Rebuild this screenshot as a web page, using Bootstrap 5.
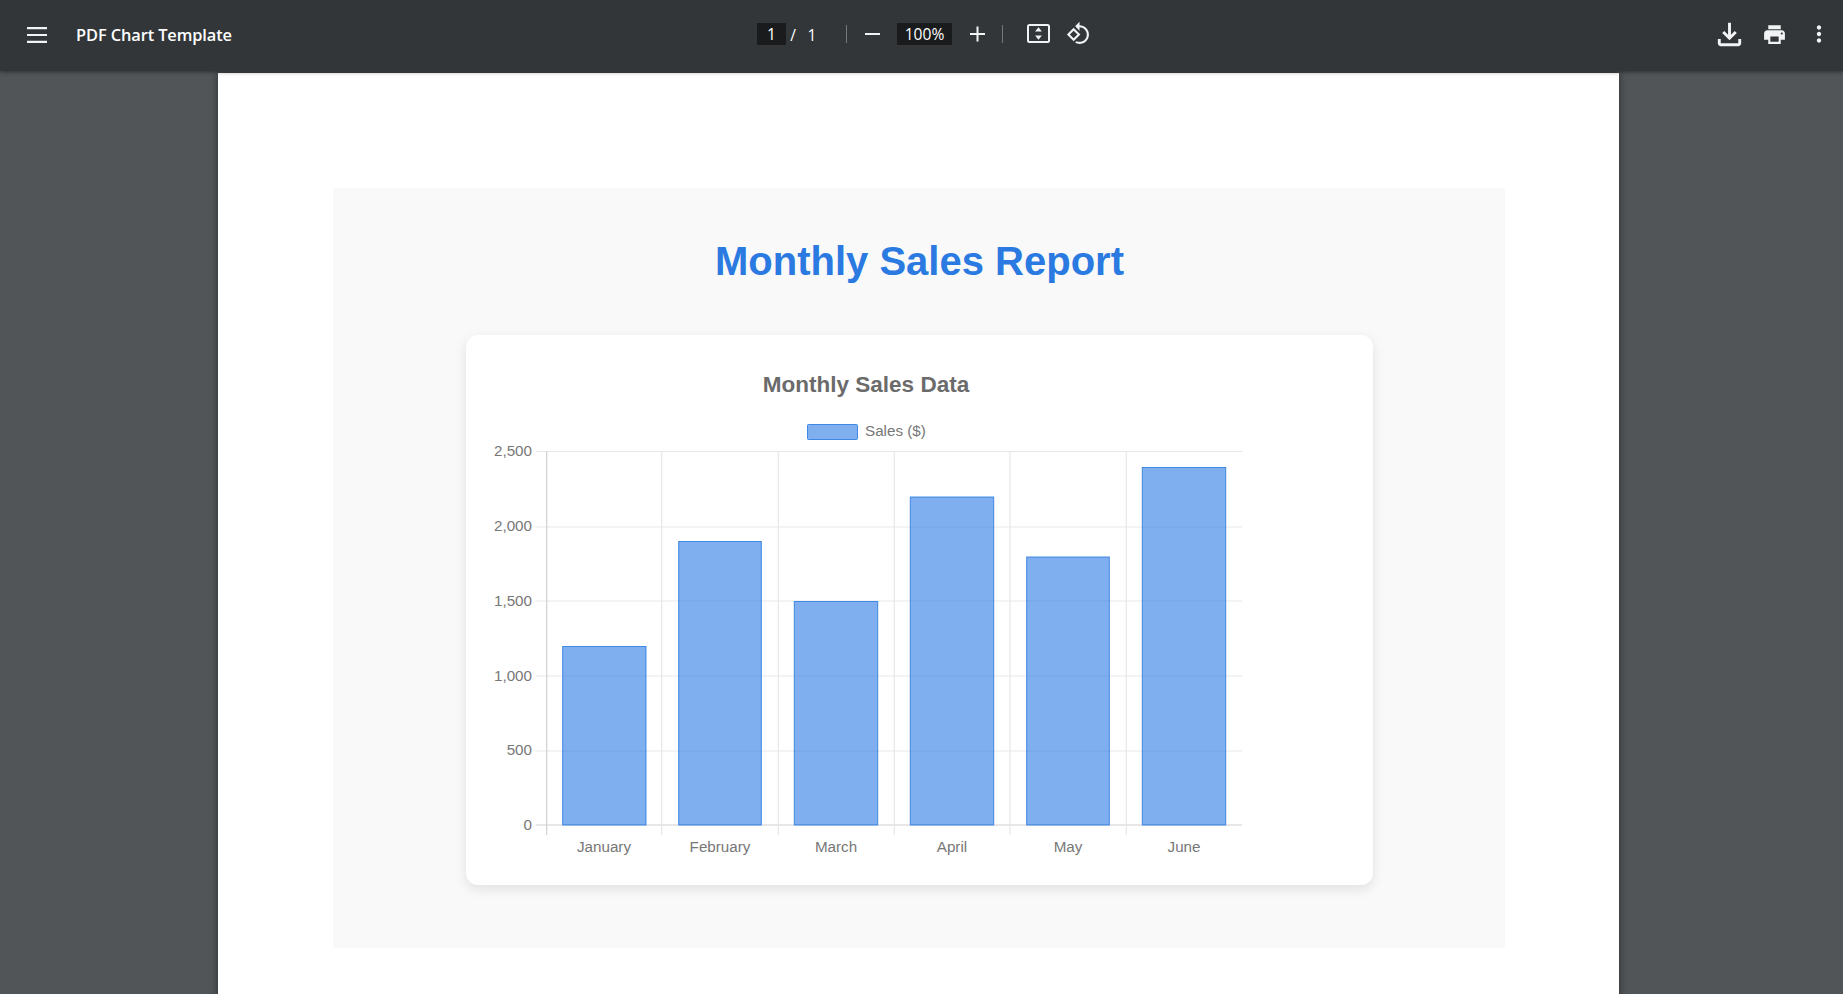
<!DOCTYPE html>
<html lang="en">
<head>
<meta charset="utf-8">
<title>PDF Chart Template</title>
<link href="https://cdn.jsdelivr.net/npm/bootstrap@5.3.0/dist/css/bootstrap.min.css" rel="stylesheet">
<style>
html, body { height: 100%; overflow: hidden; }
body { background: #515558; font-family: "Open Sans", "Liberation Sans", sans-serif; }
.viewer-bar { height: 71px; padding-bottom: 3px; background: #323639; color: #fff; position: relative; z-index: 5; box-shadow: 0 1px 4px rgba(0,0,0,.45); }
.viewer-bar svg { fill: #f1f3f4; display: block; flex: none; }
.bar-left { width: 757px; padding-left: 26.500px; padding-top: 3px; }
.doc-name { margin-left: 29.500px; font-size: 16.400px; font-weight: 600; letter-spacing: -.1px; }
.num-box { height: 22px; background: #191b1c; font-size: 15.600px; line-height: 22px; text-align: center; }
.num-page { width: 29px; }
.num-zoom { width: 55px; margin-left: 17px; }
.cell-slash { width: 14px; padding-top: 3px; text-align: center; font-size: 15.600px; }
.cell-total { width: 24px; padding-top: 3px; text-align: center; font-size: 15.600px; }
.bar-rule { width: 1px; height: 18px; background: #75787b; }
.rule-a { margin-left: 22px; }
.rule-b { margin-left: 17px; }
.ic-minus { margin-left: 18px; }
.ic-plus { margin-left: 18px; }
.ic-fit { margin-left: 24px; }
.ic-rot { margin-left: 16px; }
.ic-print { margin-left: 15px; }
.ic-dots { margin-left: 19px; margin-right: 11px; }
.sheet-area { padding-left: 218px; padding-top: 2px; }
.pdf-sheet { width: 1401px; height: 930px; background: #fff; padding: 115px 114px 0 115px; box-shadow: 0 0 8px rgba(0,0,0,.45); }
.report-panel { background: #f9f9f9; padding: 49px 0 63px 133px; }
.report-title { width: 907px; font-family: "Liberation Sans", Arial, sans-serif; font-size: 40px; font-weight: 700; line-height: 48px; color: #2a7ae2; margin: 0 0 50px; text-align: center; }
.chart-card { width: 907px; height: 550px; border: 0; border-radius: 12px; box-shadow: 0 4px 12px rgba(0,0,0,.1); }
.chart-svg { display: block; width: 907px; height: 550px; font-family: "Liberation Sans", Arial, sans-serif; }
.ch-title { font-size: 22.500px; font-weight: 700; fill: #6b6b6b; text-anchor: middle; }
.ch-tick { font-size: 15.200px; fill: #777; }
.ch-y { text-anchor: end; }
.ch-x { text-anchor: middle; }
.grid-l { stroke: #e7e7e7; stroke-width: 1.2; }
.axis-l { stroke: #d0d0d0; stroke-width: 1.2; }
.bar-r { fill: rgba(42,122,226,.6); stroke: rgba(42,122,226,.85); stroke-width: 1; }
</style>
</head>
<body>
<div class="viewer-bar d-flex align-items-center">
  <div class="bar-left d-flex align-items-center">
    <svg width="20" height="16" viewBox="0 0 20 16" aria-hidden="true"><path d="M0 0h20v2.2H0zM0 6.9h20v2.2H0zM0 13.8h20V16H0z"/></svg>
    <span class="doc-name">PDF Chart Template</span>
  </div>
  <div class="d-flex align-items-center">
    <span class="num-box num-page">1</span>
    <span class="cell-slash">/</span>
    <span class="cell-total">1</span>
    <span class="bar-rule rule-a"></span>
    <svg class="ic-minus" width="15" height="16" viewBox="0 0 15 16" aria-hidden="true"><path d="M0 7h15v2H0z"/></svg>
    <span class="num-box num-zoom">100%</span>
    <svg class="ic-plus" width="15" height="16" viewBox="0 0 15 16" aria-hidden="true"><path d="M6.5 .5h2V7H15v2H8.500v6.500h-2V9H0V7h6.500z"/></svg>
    <span class="bar-rule rule-b"></span>
    <svg class="ic-fit" width="23" height="19" viewBox="0 0 23 19" aria-hidden="true"><path fill-rule="evenodd" d="M2.500 0h18A2.500 2.500 0 0 1 23 2.500v14a2.500 2.500 0 0 1-2.500 2.500h-18A2.500 2.500 0 0 1 0 16.500v-14A2.500 2.500 0 0 1 2.500 0zM2.500 2a.5.5 0 0 0-.5.5v14a.5.5 0 0 0 .5.5h18a.5.5 0 0 0 .5-.5v-14a.5.5 0 0 0-.5-.5z"/><path d="M11.500 3.200l3.400 4.200h-6.800zM11.500 15.800l-3.400-4.200h6.800z"/></svg>
    <svg class="ic-rot" width="25" height="25" viewBox="0 0 24 24" aria-hidden="true"><path d="M7.340 6.410L.86 12.900l6.490 6.480 6.490-6.480-6.500-6.490zM3.690 12.900l3.660-3.660L11 12.900l-3.660 3.660-3.650-3.660zm15.670-6.260C17.610 4.880 15.300 4 13 4V.76L8.760 5 13 9.240V6c1.790 0 3.580.68 4.950 2.050 2.730 2.730 2.730 7.170 0 9.900C16.580 19.320 14.790 20 13 20c-.97 0-1.940-.21-2.840-.61l-1.490 1.490C10.020 21.620 11.510 22 13 22c2.300 0 4.610-.88 6.360-2.640 3.520-3.510 3.520-9.210 0-12.720z"/></svg>
  </div>
  <div class="ms-auto d-flex align-items-center">
    <svg width="35" height="35" viewBox="0 0 24 24" aria-hidden="true"><path d="M18 15v3H6v-3H4v3c0 1.100.9 2 2 2h12c1.100 0 2-.9 2-2v-3h-2zm-1-4l-1.410-1.410L13 12.170V4h-2v8.170L8.410 9.590 7 11l5 5 5-5z"/></svg>
    <svg class="ic-print" width="25" height="25" viewBox="0 0 24 24" aria-hidden="true"><path d="M19 8H5c-1.660 0-3 1.340-3 3v6h4v4h12v-4h4v-6c0-1.660-1.340-3-3-3zm-3 11H8v-5h8v5zm3-7c-.55 0-1-.45-1-1s.45-1 1-1 1 .45 1 1-.45 1-1 1zm-1-9H6v4h12V3z"/></svg>
    <svg class="ic-dots" width="26" height="26" viewBox="0 0 24 24" aria-hidden="true"><path d="M12 8c1.100 0 2-.9 2-2s-.9-2-2-2-2 .9-2 2 .9 2 2 2zm0 2c-1.100 0-2 .9-2 2s.9 2 2 2 2-.9 2-2-.9-2-2-2zm0 6c-1.100 0-2 .9-2 2s.9 2 2 2 2-.9 2-2-.9-2-2-2z"/></svg>
  </div>
</div>
<div class="sheet-area">
  <div class="pdf-sheet">
    <div class="report-panel">
      <h1 class="report-title">Monthly Sales Report</h1>
      <div class="card chart-card bg-white">
        <svg class="chart-svg" viewBox="466 335 907 550" role="img" aria-label="Monthly Sales Data bar chart">
          <text class="ch-title" x="866" y="392">Monthly Sales Data</text>
          <rect class="bar-r" x="807.500" y="424.500" width="50" height="15" rx="1"/>
          <text class="ch-tick" x="865" y="436">Sales ($)</text>
          <g>
            <line class="grid-l" x1="536" x2="1242" y1="451.500" y2="451.500"/>
            <line class="grid-l" x1="536" x2="1242" y1="527" y2="527"/>
            <line class="grid-l" x1="536" x2="1242" y1="601" y2="601"/>
            <line class="grid-l" x1="536" x2="1242" y1="676" y2="676"/>
            <line class="grid-l" x1="536" x2="1242" y1="751" y2="751"/>
            <line class="axis-l" x1="536" x2="1242" y1="825" y2="825"/>
            <line class="axis-l" x1="546.700" x2="546.700" y1="451" y2="835"/>
            <line class="grid-l" x1="661.700" x2="661.700" y1="451" y2="835"/>
            <line class="grid-l" x1="778.300" x2="778.300" y1="451" y2="835"/>
            <line class="grid-l" x1="894.300" x2="894.300" y1="451" y2="835"/>
            <line class="grid-l" x1="1010" x2="1010" y1="451" y2="835"/>
            <line class="grid-l" x1="1126.300" x2="1126.300" y1="451" y2="835"/>
          </g>
          <rect class="bar-r" x="562.700" y="646.500" width="83.300" height="178.500"/>
          <rect class="bar-r" x="678.700" y="541.500" width="82.600" height="283.500"/>
          <rect class="bar-r" x="794.300" y="601.500" width="83.400" height="223.500"/>
          <rect class="bar-r" x="910.300" y="497" width="83.400" height="328"/>
          <rect class="bar-r" x="1026.700" y="557" width="82.600" height="268"/>
          <rect class="bar-r" x="1142.300" y="467.500" width="83.400" height="357.500"/>
          <text class="ch-tick ch-y" x="532" y="456">2,500</text>
          <text class="ch-tick ch-y" x="532" y="531">2,000</text>
          <text class="ch-tick ch-y" x="532" y="606">1,500</text>
          <text class="ch-tick ch-y" x="532" y="681">1,000</text>
          <text class="ch-tick ch-y" x="532" y="755">500</text>
          <text class="ch-tick ch-y" x="532" y="830">0</text>
          <text class="ch-tick ch-x" x="604" y="852">January</text>
          <text class="ch-tick ch-x" x="720" y="852">February</text>
          <text class="ch-tick ch-x" x="836" y="852">March</text>
          <text class="ch-tick ch-x" x="952" y="852">April</text>
          <text class="ch-tick ch-x" x="1068" y="852">May</text>
          <text class="ch-tick ch-x" x="1184" y="852">June</text>
        </svg>
      </div>
    </div>
  </div>
</div>
<script src="https://cdn.jsdelivr.net/npm/bootstrap@5.3.0/dist/js/bootstrap.bundle.min.js"></script>
</body>
</html>
